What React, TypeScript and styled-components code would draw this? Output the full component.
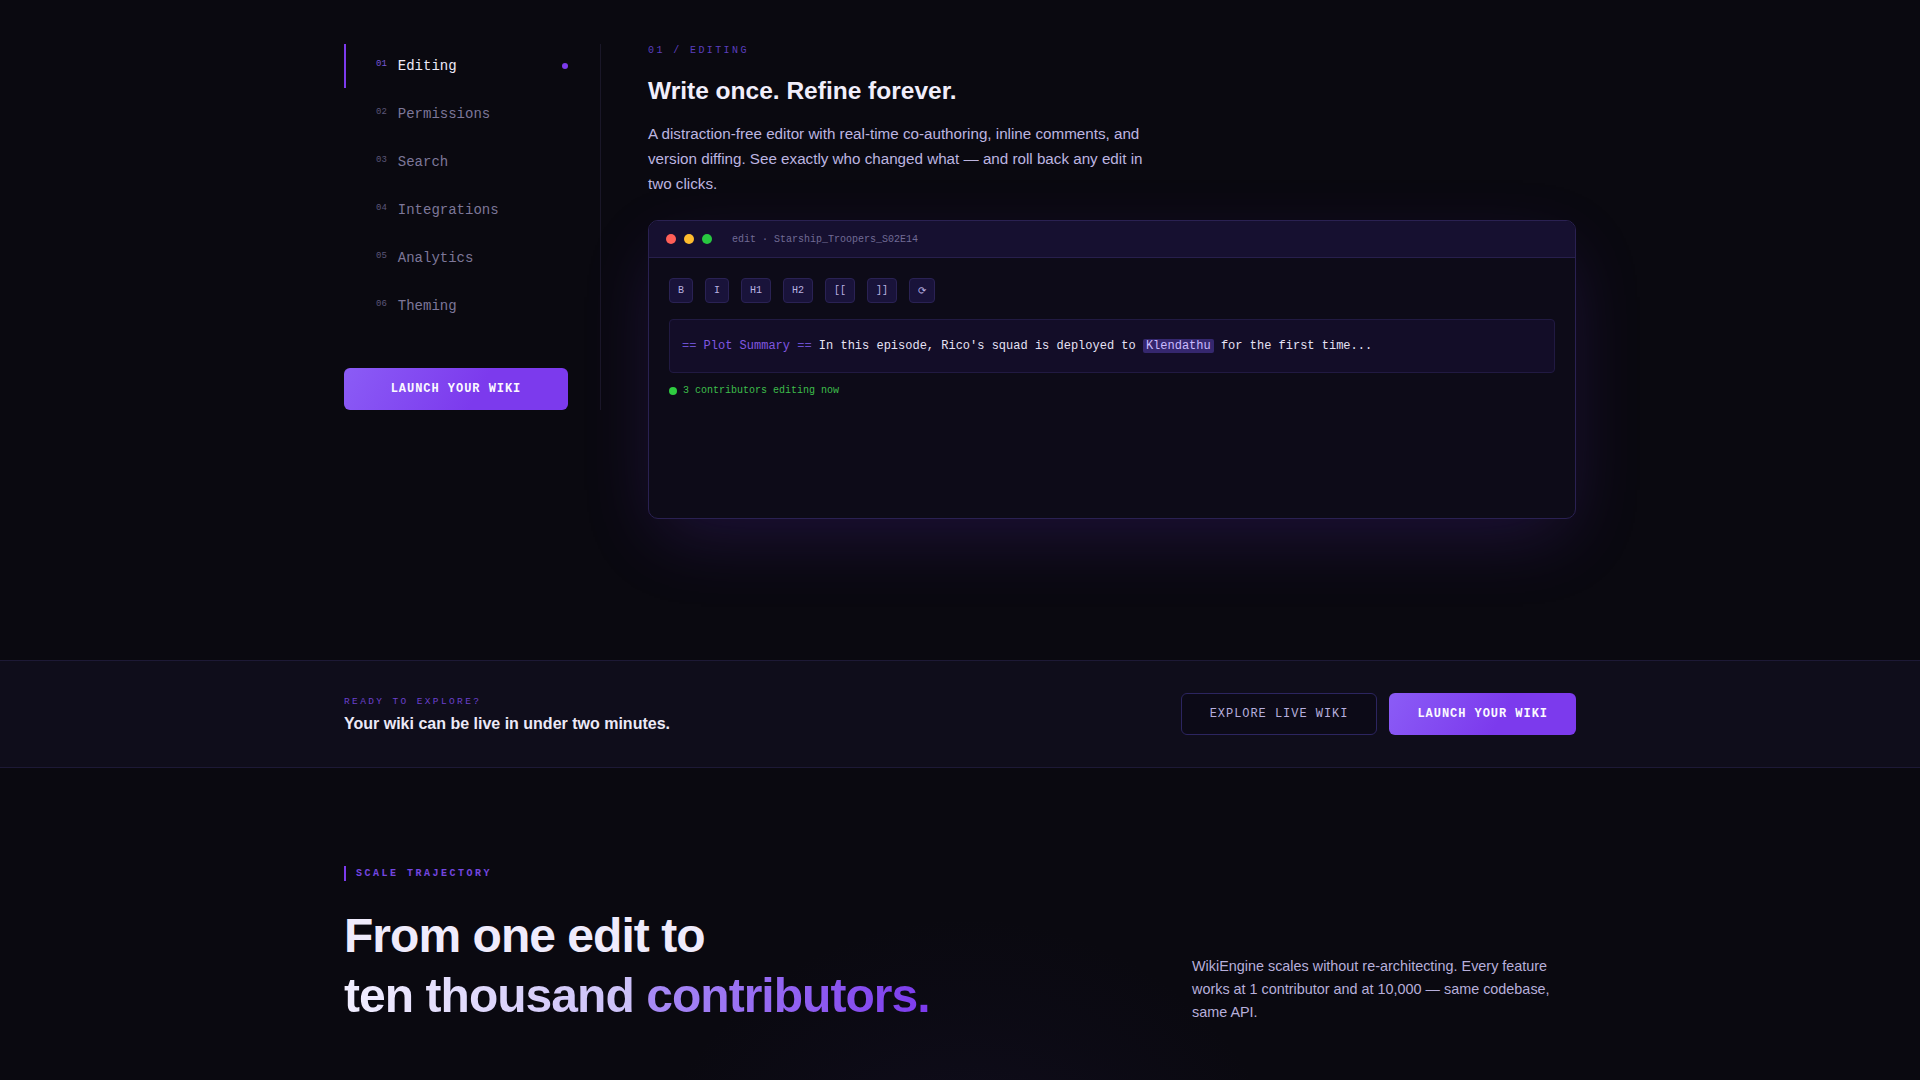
import React from "react";
import styled, { createGlobalStyle } from "styled-components";

const mono = `"Liberation Mono", "DejaVu Sans Mono", monospace`;
const sans = `"Liberation Sans", Arial, sans-serif`;

const GlobalStyle = createGlobalStyle`
    html, body {
        margin: 0;
        padding: 0;
        background: #0a0910;
        color: #ece9f7;
        font-family: ${sans};
        -webkit-font-smoothing: antialiased;
    }
    * {
        box-sizing: border-box;
    }
`;

interface Feature {
    num: string,
    label: string
}
const features: Feature[] = [
    { num: "01", label: "Editing" },
    { num: "02", label: "Permissions" },
    { num: "03", label: "Search" },
    { num: "04", label: "Integrations" },
    { num: "05", label: "Analytics" },
    { num: "06", label: "Theming" },
];

const tools = ["B", "I", "H1", "H2", "[[", "]]", "⟳"];

const App = () => {
    const active = 0;
    return (
        <>
            <GlobalStyle />
            <FeatureSection>
                <Container>
                    <FeatureGrid>
                        <Sidebar>
                            <NavList>
                                {features.map((f, i) => (
                                    <NavItem key={f.num} $active={i === active}>
                                        <NavNum $active={i === active}>{f.num}</NavNum>
                                        <NavLabel $active={i === active}>{f.label}</NavLabel>
                                        {i === active && <ActiveDot />}
                                    </NavItem>
                                ))}
                            </NavList>
                            <PrimaryButton $block>Launch your wiki</PrimaryButton>
                        </Sidebar>
                        <FeatureBody>
                            <Eyebrow>01 / Editing</Eyebrow>
                            <FeatureTitle>Write once. Refine forever.</FeatureTitle>
                            <FeatureText>
                                A distraction-free editor with real-time co-authoring, inline comments, and
                                version diffing. See exactly who changed what — and roll back any edit in
                                two clicks.
                            </FeatureText>
                            <EditorWindow>
                                <TitleBar>
                                    <TrafficDot $color="#ff5f57" />
                                    <TrafficDot $color="#febc2e" />
                                    <TrafficDot $color="#28c840" />
                                    <FileName>edit · Starship_Troopers_S02E14</FileName>
                                </TitleBar>
                                <EditorBody>
                                    <Toolbar>
                                        {tools.map((t) => (
                                            <ToolButton key={t}>{t}</ToolButton>
                                        ))}
                                    </Toolbar>
                                    <WikiText>
                                        <Markup>==</Markup> <SectionName>Plot Summary</SectionName>{" "}
                                        <Markup>==</Markup> In this episode, Rico's squad is deployed to{" "}
                                        <LinkMark>Klendathu</LinkMark> for the first time...
                                    </WikiText>
                                    <Presence>
                                        <PresenceDot />
                                        3 contributors editing now
                                    </Presence>
                                </EditorBody>
                            </EditorWindow>
                        </FeatureBody>
                    </FeatureGrid>
                </Container>
            </FeatureSection>

            <CtaBand>
                <Container>
                    <CtaRow>
                        <div>
                            <CtaEyebrow>Ready to explore?</CtaEyebrow>
                            <CtaTitle>Your wiki can be live in under two minutes.</CtaTitle>
                        </div>
                        <CtaActions>
                            <GhostButton>Explore live wiki</GhostButton>
                            <PrimaryButton>Launch your wiki</PrimaryButton>
                        </CtaActions>
                    </CtaRow>
                </Container>
            </CtaBand>

            <ScaleSection>
                <Container>
                    <ScaleLabel>Scale trajectory</ScaleLabel>
                    <ScaleGrid>
                        <ScaleTitle>
                            From one edit to
                            <br />
                            <SoftGradient>ten thousand </SoftGradient>
                            <VioletGradient>contributors.</VioletGradient>
                        </ScaleTitle>
                        <ScaleText>
                            WikiEngine scales without re-architecting. Every feature works at 1
                            contributor and at 10,000 — same codebase, same API.
                        </ScaleText>
                    </ScaleGrid>
                </Container>
            </ScaleSection>
        </>
    );
};

const Container = styled.div`
    width: 1232px;
    margin: 0 auto;
`;

/* feature tabs */
const FeatureSection = styled.section`
    padding: 44px 0 141px;
`;
const FeatureGrid = styled.div`
    display: grid;
    grid-template-columns: 257px 1fr;
    align-items: start;
`;
const Sidebar = styled.aside`
    display: flex;
    flex-direction: column;
    gap: 40px;
    padding-right: 32px;
    border-right: 1px solid #1a1728;
`;
const NavList = styled.nav`
    display: flex;
    flex-direction: column;
    gap: 4px;
`;
const NavItem = styled.div<{ $active: boolean }>`
    display: flex;
    align-items: center;
    gap: 11px;
    height: 44px;
    padding-left: 30px;
    border-left: 2px solid ${(p) => (p.$active ? "#7c3aed" : "transparent")};
`;
const NavNum = styled.span<{ $active: boolean }>`
    font-family: ${mono};
    font-size: 9px;
    margin-bottom: 4px;
    color: ${(p) => (p.$active ? "#7657d6" : "#5c5679")};
`;
const NavLabel = styled.span<{ $active: boolean }>`
    font-family: ${mono};
    font-size: 14px;
    color: ${(p) => (p.$active ? "#eeeaf9" : "#7d7799")};
`;
const ActiveDot = styled.span`
    margin-left: auto;
    width: 6px;
    height: 6px;
    border-radius: 50%;
    background: #7c3aed;
`;
const PrimaryButton = styled.button<{ $block?: boolean }>`
    height: 42px;
    width: ${(p) => (p.$block ? "100%" : "auto")};
    padding: 0 28px;
    border: none;
    border-radius: 6px;
    background: linear-gradient(120deg, #8b5cf6 0%, #7c3aed 60%, #7c3aed 100%);
    color: #fbf9ff;
    font-family: ${mono};
    font-size: 12px;
    font-weight: bold;
    letter-spacing: 0.08em;
    text-transform: uppercase;
    cursor: pointer;
`;
const FeatureBody = styled.div`
    padding-left: 47px;
`;
const Eyebrow = styled.div`
    font-family: ${mono};
    font-size: 10px;
    line-height: 14px;
    letter-spacing: 0.24em;
    text-transform: uppercase;
    color: #5b3fbf;
    margin-bottom: 18px;
`;
const FeatureTitle = styled.h2`
    margin: 0 0 16px;
    font-size: 24.5px;
    line-height: 29px;
    font-weight: bold;
    color: #f1eefb;
`;
const FeatureText = styled.p`
    margin: 0 0 24px;
    max-width: 512px;
    font-size: 15.2px;
    line-height: 25px;
    color: #bdb5e0;
`;

/* editor mock */
const EditorWindow = styled.div`
    border: 1px solid #2a2152;
    border-radius: 10px;
    background: #0d0b18;
    overflow: hidden;
    box-shadow: 0 24px 70px -12px rgba(110, 50, 220, 0.22);
`;
const TitleBar = styled.div`
    display: flex;
    align-items: center;
    gap: 8px;
    height: 37px;
    padding: 0 17px;
    background: #161030;
    border-bottom: 1px solid #271f4c;
`;
const TrafficDot = styled.span<{ $color: string }>`
    width: 10px;
    height: 10px;
    border-radius: 50%;
    background: ${(p) => p.$color};
`;
const FileName = styled.span`
    margin-left: 12px;
    font-family: ${mono};
    font-size: 10px;
    color: #716b95;
`;
const EditorBody = styled.div`
    min-height: 260px;
    padding: 20px 20px;
`;
const Toolbar = styled.div`
    display: flex;
    gap: 12px;
    margin-bottom: 16px;
`;
const ToolButton = styled.span`
    display: inline-flex;
    align-items: center;
    justify-content: center;
    height: 25px;
    padding: 0 8px;
    border: 1px solid #2a2254;
    border-radius: 4px;
    background: #19133a;
    font-family: ${mono};
    font-size: 10px;
    color: #bab2e2;
`;
const WikiText = styled.div`
    padding: 16px 12px;
    border: 1px solid #211a42;
    border-radius: 4px;
    background: #130d28;
    font-family: ${mono};
    font-size: 12px;
    line-height: 20px;
    color: #e6e2f5;
    margin-bottom: 12px;
`;
const Markup = styled.span`
    color: #6a4fd0;
`;
const SectionName = styled.span`
    color: #8057e0;
`;
const LinkMark = styled.span`
    padding: 0 3px;
    border-radius: 2px;
    background: #35276e;
    color: #cbbcff;
`;
const Presence = styled.div`
    display: flex;
    align-items: center;
    gap: 6px;
    font-family: ${mono};
    font-size: 10px;
    color: #3dbd4b;
`;
const PresenceDot = styled.span`
    width: 8px;
    height: 8px;
    border-radius: 50%;
    background: #2ecc40;
`;

/* call to action band */
const CtaBand = styled.section`
    background: #0f0d1b;
    border-top: 1px solid #1d1936;
    border-bottom: 1px solid #1d1936;
    padding: 32px 0;
`;
const CtaRow = styled.div`
    display: flex;
    align-items: center;
    justify-content: space-between;
`;
const CtaEyebrow = styled.div`
    font-family: ${mono};
    font-size: 9.5px;
    line-height: 14px;
    letter-spacing: 0.25em;
    text-transform: uppercase;
    color: #6a40cc;
    margin-bottom: 5px;
`;
const CtaTitle = styled.div`
    font-size: 16px;
    line-height: 20px;
    font-weight: bold;
    color: #ece9f7;
`;
const CtaActions = styled.div`
    display: flex;
    gap: 12px;
`;
const GhostButton = styled.button`
    height: 42px;
    padding: 0 28px;
    border: 1px solid #2c2560;
    border-radius: 6px;
    background: #0c0a17;
    color: #b6aedd;
    font-family: ${mono};
    font-size: 12px;
    letter-spacing: 0.08em;
    text-transform: uppercase;
    cursor: pointer;
`;

/* scale section */
const ScaleSection = styled.section`
    padding: 94px 0 80px;
    background: radial-gradient(circle 340px at 967px 489px, rgba(70, 50, 140, 0.14) 0%, rgba(40, 30, 90, 0.06) 70%, transparent 100%);
`;
const ScaleLabel = styled.div`
    display: inline-block;
    border-left: 2px solid #7c3aed;
    padding-left: 10px;
    font-family: ${mono};
    font-size: 10px;
    line-height: 15px;
    font-weight: bold;
    letter-spacing: 0.25em;
    text-transform: uppercase;
    color: #7446e0;
    margin-bottom: 25px;
`;
const ScaleGrid = styled.div`
    display: grid;
    grid-template-columns: 1fr 384px;
    align-items: end;
`;
const ScaleTitle = styled.h2`
    margin: 0;
    font-size: 48px;
    line-height: 60px;
    font-weight: bold;
    letter-spacing: -0.02em;
    color: #efebfc;
`;
const SoftGradient = styled.span`
    background: linear-gradient(90deg, #f1eeff 0%, #c9bdf7 100%);
    -webkit-background-clip: text;
    background-clip: text;
    color: transparent;
`;
const VioletGradient = styled.span`
    background: linear-gradient(90deg, #a88cf5 0%, #7c3aed 100%);
    -webkit-background-clip: text;
    background-clip: text;
    color: transparent;
`;
const ScaleText = styled.p`
    margin: 0 0 2px;
    font-size: 14.4px;
    line-height: 23px;
    color: #b7afdb;
`;

export default App;
